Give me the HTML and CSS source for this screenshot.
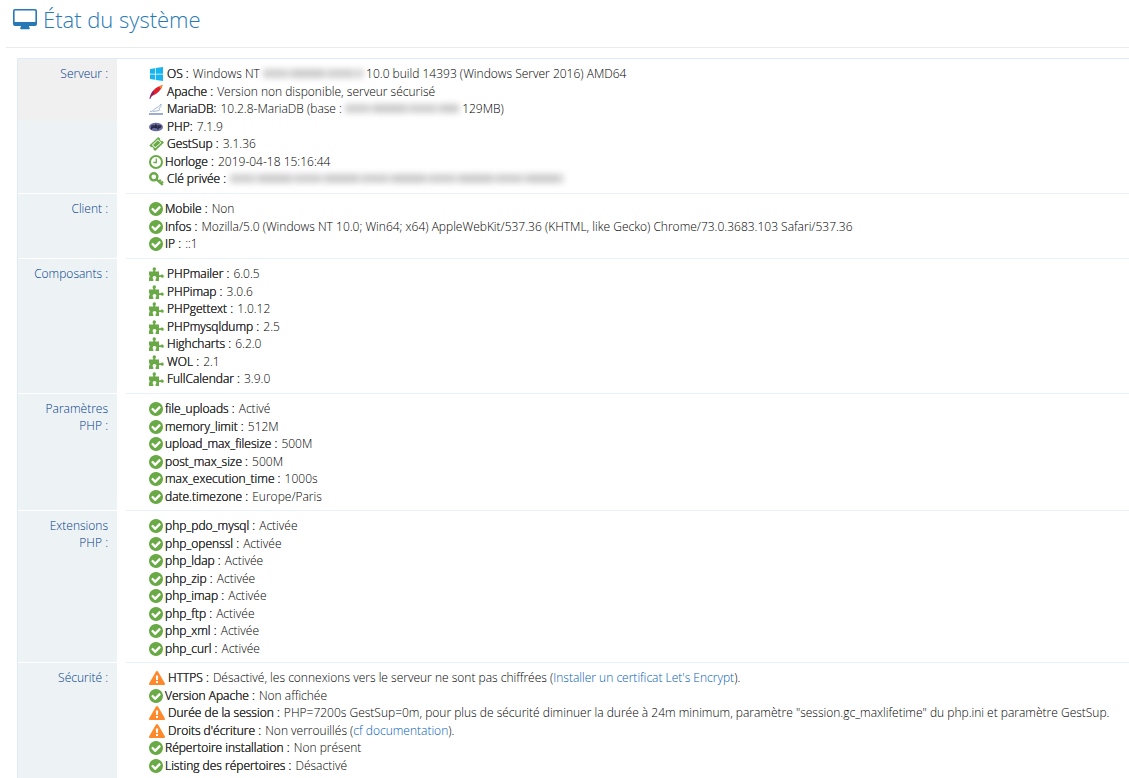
FILE: index.html
```html
<!DOCTYPE html>
<html lang="fr">
<head>
  <meta charset="utf-8">
  <title>État du système</title>
  <link rel="stylesheet" href="styles.css">
</head>
<body>
  <svg class="sprite" aria-hidden="true">
    <symbol id="check" viewBox="0 0 1536 1536">
      <path d="M1284 606q0-28-18-46l-91-90q-19-19-45-19t-45 19l-408 407-226-226q-19-19-45-19t-45 19l-91 90q-18 18-18 46 0 27 18 45l362 362q19 19 45 19 27 0 46-19l543-543q18-18 18-45zM1536 768q0 209-103 385.500t-279.500 279.500-385.500 103-385.500-103-279.500-279.500-103-385.500 103-385.500 279.500-279.500 385.500-103 385.500 103 279.500 279.500 103 385.500z"/>
    </symbol>
    <symbol id="puzzle" viewBox="0 0 15 14">
      <path d="M0 4.500h4.200V3.600A2 2 0 0 1 3.600 2a1.700 1.700 0 0 1 3.400 0c0 .8-.7 1-.7 1.700v.8H10v3.800h1.600c.5 0 .6-.7 1.600-.7a1.600 1.600 0 0 1 0 3.200c-1 0-1.100-.7-1.600-.7H10V14H6.600v-1.500c0-.6.8-.8.8-1.700a1.900 1.900 0 0 0-3.800 0c0 .9.700 1.100.7 1.700V14H0v-3.500h.6V8.300H0z"/>
    </symbol>
    <symbol id="warning" viewBox="0 0 16 14">
      <path fill-rule="evenodd" d="M7 .6a1.150 1.150 0 0 1 2 0l6.800 11.700a1.100 1.100 0 0 1-1 1.700H1.200a1.100 1.100 0 0 1-1-1.700zM6.800 4.500l.3 4.500h1.800l.3-4.500zM7 10v2h2v-2z"/>
    </symbol>
  </svg>

  <h1 class="page-title">
    <svg class="title-icon" viewBox="0 0 24 21" aria-hidden="true">
      <path fill-rule="evenodd" d="M2 0h20a2 2 0 0 1 2 2v13a2 2 0 0 1-2 2h-6c0 1 .8 1.800.8 2.500 0 .4-.3.700-.8.700H8c-.5 0-.8-.3-.8-.7 0-.7.8-1.500.8-2.500H2a2 2 0 0 1-2-2V2a2 2 0 0 1 2-2zM2.200 1.600a.6.6 0 0 0-.6.600v10.200a.6.6 0 0 0 .6.600h19.600a.6.6 0 0 0 .6-.6V2.200a.6.6 0 0 0-.6-.6z"/>
    </svg>
    État du système
  </h1>

  <dl class="info">
    <div class="info-row server">
      <dt>Serveur :</dt>
      <dd>
        <ul>
          <li><svg class="icon logo" viewBox="0 0 14 14"><path fill="#18b4f0" d="M1 2l5-.8v5.500H1zM6.700 1.100L14 0v6.700H6.700zM1 7.400h5v5.400L1 12zM6.700 7.400H14V14l-7.300-1.100z"/></svg><b>OS :</b> Windows NT <span class="masked host"></span> 10.0 build 14393 (Windows Server 2016) AMD64</li>
          <li><svg class="icon logo" viewBox="0 0 13 14"><path fill="#e01f2d" d="M1 12C1 7 6 2 13 0c-.6 4-5 9-10.500 11z"/><path fill="#f08a24" d="M9.500 1.500L13 0c-.2 1.500-.8 2.500-1.500 4z"/><path fill="#8c1f6a" d="M0 14c0-3 2-6 4-8.500L4.800 8.500 2.500 10.500.7 14z"/></svg><b>Apache :</b> Version non disponible, serveur sécurisé</li>
          <li><svg class="icon logo" viewBox="0 0 14 12"><path fill="none" stroke="#a3b6d2" d="M1 8.500c3 .3 3.500-2 6-3.500 2-1.200 3.500-1.500 5-4 .5 2.500-.8 3.500-2 4.500l1 2M4 8.500l6-1"/><path stroke="#8299bf" stroke-width="1.600" d="M0 11h14"/></svg><b>MariaDB:</b> 10.2.8-MariaDB (base : <span class="masked base"></span> 129MB)</li>
          <li><svg class="icon logo" viewBox="0 0 14 10"><ellipse cx="7" cy="5" rx="7" ry="4.300" fill="#696da3"/><path fill="none" stroke="#24253d" stroke-width="1.300" d="M2.300 7.500l.8-3.700h1.500c1.500 0 .8 2-1.500 2M6 6.200l.9-4M6.500 4h1.200l-.5 2.200M8.600 7.500l.8-3.700h1.500c1.500 0 .8 2-1.500 2"/></svg><b>PHP:</b> 7.1.9</li>
          <li><svg class="icon wide ok" viewBox="0 0 15 14"><path fill-rule="evenodd" d="M9.300 0L11.200 1.800a1.500 1.500 0 0 0 2 2L15 5.600 6.100 14l-1.800-1.800a1.500 1.500 0 0 0-2-2L.3 8.400zM8.900 2.300L2.900 8l3.300 3.300L12.400 5.800zM8.900 3.200L4 8l2.300 2.300 5.100-4.500z"/></svg><b>GestSup :</b> 3.1.36</li>
          <li><svg class="icon ok" viewBox="0 0 14 14"><circle cx="7" cy="7" r="6" fill="none" stroke="#69aa46" stroke-width="2"/><path fill="none" stroke="#69aa46" stroke-width="1.300" d="M7.300 3.500v4H4.400"/></svg><b>Horloge :</b> 2019-04-18 15:16:44</li>
          <li><svg class="icon wide ok" viewBox="0 0 15 14"><path fill="none" stroke="#69aa46" stroke-width="2.200" d="M7.400 7.400L13.700 13M10 9.700l1.800-2M12 11.500l2-2"/><circle cx="4.800" cy="4.800" r="3.600" fill="none" stroke="#69aa46" stroke-width="2.400"/></svg><b>Clé privée :</b> <span class="masked key"></span></li>
        </ul>
      </dd>
    </div>

    <div class="info-row">
      <dt>Client :</dt>
      <dd>
        <ul>
          <li><svg class="icon ok"><use href="#check"/></svg><b>Mobile :</b> Non</li>
          <li><svg class="icon ok"><use href="#check"/></svg><b>Infos :</b> Mozilla/5.0 (Windows NT 10.0; Win64; x64) AppleWebKit/537.36 (KHTML, like Gecko) Chrome/73.0.3683.103 Safari/537.36</li>
          <li><svg class="icon ok"><use href="#check"/></svg><b>IP :</b> ::1</li>
        </ul>
      </dd>
    </div>

    <div class="info-row">
      <dt>Composants :</dt>
      <dd>
        <ul>
          <li><svg class="icon wide ok"><use href="#puzzle"/></svg><b>PHPmailer :</b> 6.0.5</li>
          <li><svg class="icon wide ok"><use href="#puzzle"/></svg><b>PHPimap :</b> 3.0.6</li>
          <li><svg class="icon wide ok"><use href="#puzzle"/></svg><b>PHPgettext :</b> 1.0.12</li>
          <li><svg class="icon wide ok"><use href="#puzzle"/></svg><b>PHPmysqldump :</b> 2.5</li>
          <li><svg class="icon wide ok"><use href="#puzzle"/></svg><b>Highcharts :</b> 6.2.0</li>
          <li><svg class="icon wide ok"><use href="#puzzle"/></svg><b>WOL :</b> 2.1</li>
          <li><svg class="icon wide ok"><use href="#puzzle"/></svg><b>FullCalendar :</b> 3.9.0</li>
        </ul>
      </dd>
    </div>

    <div class="info-row">
      <dt>Paramètres PHP :</dt>
      <dd>
        <ul>
          <li><svg class="icon ok"><use href="#check"/></svg><b>file_uploads :</b> Activé</li>
          <li><svg class="icon ok"><use href="#check"/></svg><b>memory_limit :</b> 512M</li>
          <li><svg class="icon ok"><use href="#check"/></svg><b>upload_max_filesize :</b> 500M</li>
          <li><svg class="icon ok"><use href="#check"/></svg><b>post_max_size :</b> 500M</li>
          <li><svg class="icon ok"><use href="#check"/></svg><b>max_execution_time :</b> 1000s</li>
          <li><svg class="icon ok"><use href="#check"/></svg><b>date.timezone :</b> Europe/Paris</li>
        </ul>
      </dd>
    </div>

    <div class="info-row">
      <dt>Extensions PHP :</dt>
      <dd>
        <ul>
          <li><svg class="icon ok"><use href="#check"/></svg><b>php_pdo_mysql :</b> Activée</li>
          <li><svg class="icon ok"><use href="#check"/></svg><b>php_openssl :</b> Activée</li>
          <li><svg class="icon ok"><use href="#check"/></svg><b>php_ldap :</b> Activée</li>
          <li><svg class="icon ok"><use href="#check"/></svg><b>php_zip :</b> Activée</li>
          <li><svg class="icon ok"><use href="#check"/></svg><b>php_imap :</b> Activée</li>
          <li><svg class="icon ok"><use href="#check"/></svg><b>php_ftp :</b> Activée</li>
          <li><svg class="icon ok"><use href="#check"/></svg><b>php_xml :</b> Activée</li>
          <li><svg class="icon ok"><use href="#check"/></svg><b>php_curl :</b> Activée</li>
        </ul>
      </dd>
    </div>

    <div class="info-row">
      <dt>Sécurité :</dt>
      <dd>
        <ul>
          <li><svg class="icon alert"><use href="#warning"/></svg><b>HTTPS :</b> Désactivé, les connexions vers le serveur ne sont pas chiffrées (<a href="#">Installer un certificat Let's Encrypt</a>).</li>
          <li><svg class="icon ok"><use href="#check"/></svg><b>Version Apache :</b> Non affichée</li>
          <li><svg class="icon alert"><use href="#warning"/></svg><b>Durée de la session :</b> PHP=7200s GestSup=0m, pour plus de sécurité diminuer la durée à 24m minimum, paramètre "session.gc_maxlifetime" du php.ini et paramètre GestSup.</li>
          <li><svg class="icon alert"><use href="#warning"/></svg><b>Droits d'écriture :</b> Non verrouillés (<a href="#">cf documentation</a>).</li>
          <li><svg class="icon ok"><use href="#check"/></svg><b>Répertoire installation :</b> Non présent</li>
          <li><svg class="icon ok"><use href="#check"/></svg><b>Listing des répertoires :</b> Désactivé</li>
        </ul>
      </dd>
    </div>
  </dl>
</body>
</html>
```
FILE: styles.css
```css
body {
  margin: 0;
  font-family: "Open Sans", sans-serif;
  font-size: 12px;
  font-weight: 300;
  line-height: 17px;
  color: #000;
  background: #fff;
}
.sprite {
  display: none;
}
.page-title {
  display: flex;
  align-items: center;
  gap: 6px;
  height: 39px;
  margin: 0 0 10px 6px;
  padding: 0 0 8px 7px;
  border-bottom: 1px solid #e8eaec;
  font-size: 22px;
  font-weight: 300;
  color: #2679b5;
}
.title-icon {
  width: 24px;
  height: 21px;
  fill: #2679b5;
}
.info {
  margin: 0 0 0 17px;
  border-top: 1px solid #dcebf7;
  border-left: 1px solid #dcebf7;
}
.info-row {
  display: grid;
  grid-template-columns: 99px 1fr;
  column-gap: 9px;
}
.info-row dt {
  padding: 6px 9px 5px 10px;
  border-bottom: 1px solid #fff;
  background: #edf3f4;
  text-align: right;
  color: #003a8c;
}
.server dt {
  background: linear-gradient(#f0f0f0 60px, #edf3f4 62px);
}
.info-row dd {
  margin: 0;
  padding: 6px 0 5px 23px;
  border-bottom: 1px solid #e8f2fa;
}
.info ul {
  margin: 0;
  padding: 0;
  list-style: none;
}
.info li {
  line-height: 18px;
  white-space: nowrap;
}
.info li:nth-child(even) {
  line-height: 17px;
}
/* light weight, darkened */
.info b {
  margin-right: 1px;
  font-weight: 300;
  color: #333;
  text-shadow: 0 0 0 #333, 0 0 0 #333;
}
.info a {
  color: #005cb8;
  text-decoration: none;
}
.icon {
  width: 14px;
  height: 14px;
  margin-right: 2px;
  vertical-align: -3px;
}
.logo {
  margin-right: 4px;
}
.wide {
  width: 15px;
  margin-right: 3px;
}
.ok {
  fill: #69aa46;
}
.alert {
  width: 16px;
  margin-right: 3px;
  fill: #ff892a;
}
/* hidden values */
.masked {
  display: inline-block;
  height: 9px;
  background: repeating-linear-gradient(90deg, #d0d0d0 0 23px, #dedede 23px 29px, #cbcbcb 29px 60px, #dadada 60px 67px);
  filter: blur(3px);
}
.host {
  width: 100px;
}
.base {
  width: 114px;
}
.key {
  width: 334px;
}
```
